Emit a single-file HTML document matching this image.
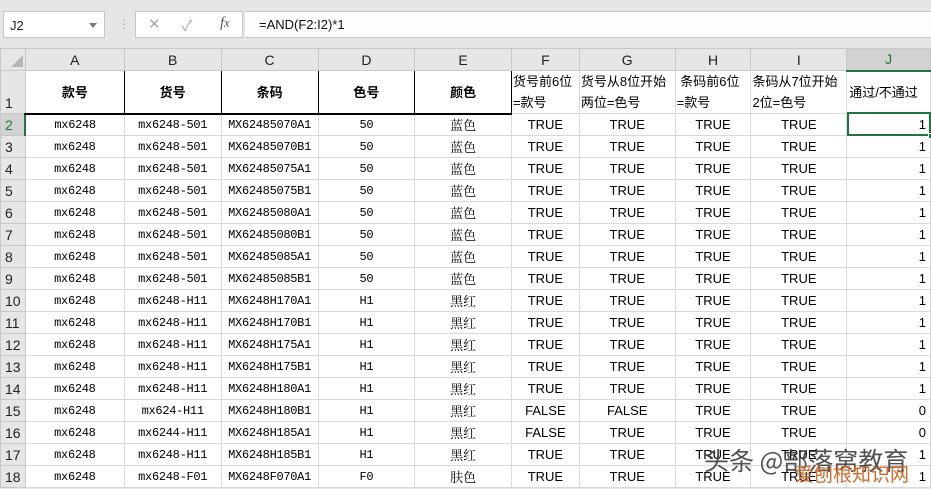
<!DOCTYPE html>
<html><head><meta charset="utf-8"><style>
*{margin:0;padding:0;box-sizing:border-box}
body{width:931px;height:489px;overflow:hidden;background:#e6e6e6;font-family:"Liberation Sans","Noto Sans CJK SC",sans-serif;position:relative}
.nb{position:absolute;left:3px;top:11px;width:102px;height:27px;background:#fff;border:1px solid #c6c6c6;font-size:13px;padding:6px 6px;color:#222}
.nb .ar{position:absolute;right:7px;top:11px;border-left:4px solid transparent;border-right:4px solid transparent;border-top:5px solid #777}
.fx{position:absolute;left:135px;top:11px;width:108px;height:27px;background:#fff;border:1px solid #c6c6c6;color:#aaa;font-size:15px}
.fb{position:absolute;left:245px;top:11px;width:690px;height:27px;background:#fdfdfd;border-top:1px solid #c6c6c6;border-bottom:1px solid #c6c6c6;font-size:13px;padding:5px 14px;color:#111}
table{position:absolute;left:0;top:48px;border-collapse:collapse;table-layout:fixed;background:#fff}
td{border:1px solid #d9d9d9;height:22px;font-size:13px;text-align:center;white-space:nowrap;overflow:hidden;padding:0;line-height:20px}
tr.h td{background:#e6e6e6;border-color:#c8c8c8;color:#222;font-size:14px}
td.r{background:#e6e6e6;border-color:#c8c8c8;color:#222;font-size:14px;text-align:left;padding-left:4px}
.m{font-family:"Liberation Mono","Noto Serif CJK SC",monospace;font-size:12px;letter-spacing:-0.3px}
.k{font-family:"Noto Serif CJK SC",serif;font-size:13px}
tr.t td.b{border-right:1px solid #000;border-bottom:2px solid #000;font-weight:bold;font-family:"Noto Sans CJK SC",sans-serif;font-size:13px}
tr.t td.w{text-align:left;font-size:13px;line-height:21px;white-space:normal;padding-left:1px}
td.n{text-align:right;padding-right:4px}
.sel{position:absolute;left:847px;top:112px;width:84px;height:24px;border:2px solid #217346}
.wm{position:absolute;left:704px;top:442px;font-size:25px;color:#333;opacity:.85;font-family:"Noto Sans CJK SC",sans-serif;white-space:nowrap}
.wm2{position:absolute;left:795px;top:460px;font-size:19px;color:#d46a2a;font-family:"Noto Sans CJK SC",sans-serif}
</style></head><body>
<div class="nb">J2<span class="ar"></span></div>
<div style="position:absolute;left:118px;top:17px;color:#aaa;font-size:12px">⋮</div>
<div class="fx"><span style="position:absolute;left:12px;top:3px">✕</span><span style="position:absolute;left:46px;top:3px">✓</span><span style="position:absolute;left:84px;top:3px;color:#555;font-style:italic;font-family:'Liberation Serif',serif">f<small>x</small></span></div>
<div class="fb">=AND(F2:I2)*1</div>
<table>
<colgroup><col style="width:25px"><col style="width:99px"><col style="width:97px"><col style="width:97px"><col style="width:97px"><col style="width:97px"><col style="width:68px"><col style="width:96px"><col style="width:76px"><col style="width:96px"><col style="width:84px"></colgroup>
<tr class="h"><td style="background:#e6e6e6"><svg width="14" height="14" style="position:relative;top:3px;left:4px"><path d="M13 1V13H1Z" fill="#b5b5b5"/></svg></td><td>A</td><td>B</td><td>C</td><td>D</td><td>E</td><td>F</td><td>G</td><td>H</td><td>I</td><td style="background:#d2d2d2;border-bottom:2px solid #217346;color:#217346">J</td></tr>
<tr class="t" style="height:43px"><td class="r" style="vertical-align:bottom">1</td><td class="b">款号</td><td class="b">货号</td><td class="b">条码</td><td class="b">色号</td><td class="b">颜色</td><td class="w">货号前6位<br>=款号</td><td class="w">货号从8位开始<br>两位=色号</td><td class="w">&nbsp;条码前6位<br>=款号</td><td class="w">条码从7位开始<br>2位=色号</td><td class="w" style="padding-left:2px">通过/不通过</td></tr>
<tr><td class="r" style="background:#d2d2d2;border-right:2px solid #217346;color:#217346">2</td><td class="m">mx6248</td><td class="m">mx6248-501</td><td class="m">MX62485070A1</td><td class="m">50</td><td class="k">蓝色</td><td>TRUE</td><td>TRUE</td><td>TRUE</td><td>TRUE</td><td class="n">1</td></tr>
<tr><td class="r">3</td><td class="m">mx6248</td><td class="m">mx6248-501</td><td class="m">MX62485070B1</td><td class="m">50</td><td class="k">蓝色</td><td>TRUE</td><td>TRUE</td><td>TRUE</td><td>TRUE</td><td class="n">1</td></tr>
<tr><td class="r">4</td><td class="m">mx6248</td><td class="m">mx6248-501</td><td class="m">MX62485075A1</td><td class="m">50</td><td class="k">蓝色</td><td>TRUE</td><td>TRUE</td><td>TRUE</td><td>TRUE</td><td class="n">1</td></tr>
<tr><td class="r">5</td><td class="m">mx6248</td><td class="m">mx6248-501</td><td class="m">MX62485075B1</td><td class="m">50</td><td class="k">蓝色</td><td>TRUE</td><td>TRUE</td><td>TRUE</td><td>TRUE</td><td class="n">1</td></tr>
<tr><td class="r">6</td><td class="m">mx6248</td><td class="m">mx6248-501</td><td class="m">MX62485080A1</td><td class="m">50</td><td class="k">蓝色</td><td>TRUE</td><td>TRUE</td><td>TRUE</td><td>TRUE</td><td class="n">1</td></tr>
<tr><td class="r">7</td><td class="m">mx6248</td><td class="m">mx6248-501</td><td class="m">MX62485080B1</td><td class="m">50</td><td class="k">蓝色</td><td>TRUE</td><td>TRUE</td><td>TRUE</td><td>TRUE</td><td class="n">1</td></tr>
<tr><td class="r">8</td><td class="m">mx6248</td><td class="m">mx6248-501</td><td class="m">MX62485085A1</td><td class="m">50</td><td class="k">蓝色</td><td>TRUE</td><td>TRUE</td><td>TRUE</td><td>TRUE</td><td class="n">1</td></tr>
<tr><td class="r">9</td><td class="m">mx6248</td><td class="m">mx6248-501</td><td class="m">MX62485085B1</td><td class="m">50</td><td class="k">蓝色</td><td>TRUE</td><td>TRUE</td><td>TRUE</td><td>TRUE</td><td class="n">1</td></tr>
<tr><td class="r">10</td><td class="m">mx6248</td><td class="m">mx6248-H11</td><td class="m">MX6248H170A1</td><td class="m">H1</td><td class="k">黑红</td><td>TRUE</td><td>TRUE</td><td>TRUE</td><td>TRUE</td><td class="n">1</td></tr>
<tr><td class="r">11</td><td class="m">mx6248</td><td class="m">mx6248-H11</td><td class="m">MX6248H170B1</td><td class="m">H1</td><td class="k">黑红</td><td>TRUE</td><td>TRUE</td><td>TRUE</td><td>TRUE</td><td class="n">1</td></tr>
<tr><td class="r">12</td><td class="m">mx6248</td><td class="m">mx6248-H11</td><td class="m">MX6248H175A1</td><td class="m">H1</td><td class="k">黑红</td><td>TRUE</td><td>TRUE</td><td>TRUE</td><td>TRUE</td><td class="n">1</td></tr>
<tr><td class="r">13</td><td class="m">mx6248</td><td class="m">mx6248-H11</td><td class="m">MX6248H175B1</td><td class="m">H1</td><td class="k">黑红</td><td>TRUE</td><td>TRUE</td><td>TRUE</td><td>TRUE</td><td class="n">1</td></tr>
<tr><td class="r">14</td><td class="m">mx6248</td><td class="m">mx6248-H11</td><td class="m">MX6248H180A1</td><td class="m">H1</td><td class="k">黑红</td><td>TRUE</td><td>TRUE</td><td>TRUE</td><td>TRUE</td><td class="n">1</td></tr>
<tr><td class="r">15</td><td class="m">mx6248</td><td class="m">mx624-H11</td><td class="m">MX6248H180B1</td><td class="m">H1</td><td class="k">黑红</td><td>FALSE</td><td>FALSE</td><td>TRUE</td><td>TRUE</td><td class="n">0</td></tr>
<tr><td class="r">16</td><td class="m">mx6248</td><td class="m">mx6244-H11</td><td class="m">MX6248H185A1</td><td class="m">H1</td><td class="k">黑红</td><td>FALSE</td><td>TRUE</td><td>TRUE</td><td>TRUE</td><td class="n">0</td></tr>
<tr><td class="r">17</td><td class="m">mx6248</td><td class="m">mx6248-H11</td><td class="m">MX6248H185B1</td><td class="m">H1</td><td class="k">黑红</td><td>TRUE</td><td>TRUE</td><td>TRUE</td><td>TRUE</td><td class="n">1</td></tr>
<tr><td class="r">18</td><td class="m">mx6248</td><td class="m">mx6248-F01</td><td class="m">MX6248F070A1</td><td class="m">F0</td><td class="k">肤色</td><td>TRUE</td><td>TRUE</td><td>TRUE</td><td>TRUE</td><td class="n">1</td></tr>
</table>
<div class="sel"><div style="position:absolute;right:-5px;bottom:-5px;width:6px;height:6px;background:#217346;border:1px solid #fff"></div></div>
<div class="wm">头条 @部落窝教育</div>
<div class="wm2">爱刨根知识网</div>
</body></html>
